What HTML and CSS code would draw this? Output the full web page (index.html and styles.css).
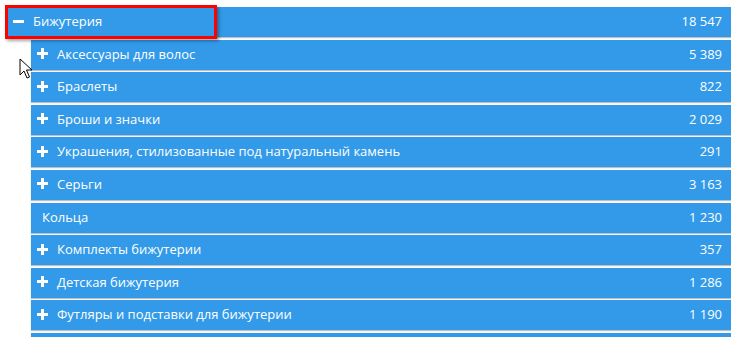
FILE: index.html
```html
<!DOCTYPE html>
<html lang="ru">

<head>
    <meta charset="UTF-8">
    <title>Бижутерия</title>
    <link rel="stylesheet" href="styles.css">
</head>

<body>
    <div class="tree">
        <div class="row root">
            <span class="toggle minus"></span>
            <span class="name">Бижутерия</span>
            <span class="count">18 547</span>
        </div>
        <div class="children">
            <div class="row"><span class="toggle plus"></span><span class="name">Аксессуары для волос</span><span class="count">5 389</span></div>
            <div class="row"><span class="toggle plus"></span><span class="name">Браслеты</span><span class="count">822</span></div>
            <div class="row"><span class="toggle plus"></span><span class="name">Броши и значки</span><span class="count">2 029</span></div>
            <div class="row"><span class="toggle plus"></span><span class="name">Украшения, стилизованные под натуральный камень</span><span class="count">291</span></div>
            <div class="row"><span class="toggle plus"></span><span class="name">Серьги</span><span class="count">3 163</span></div>
            <div class="row leaf"><span class="name">Кольца</span><span class="count">1 230</span></div>
            <div class="row"><span class="toggle plus"></span><span class="name">Комплекты бижутерии</span><span class="count">357</span></div>
            <div class="row"><span class="toggle plus"></span><span class="name">Детская бижутерия</span><span class="count">1 286</span></div>
            <div class="row"><span class="toggle plus"></span><span class="name">Футляры и подставки для бижутерии</span><span class="count">1 190</span></div>
            <div class="row"></div>
        </div>
    </div>

    <div class="highlight"></div>

    <svg class="cursor" width="14" height="22" viewBox="0 0 14 22">
        <path d="M1 1 L1 17 L5 13 L8 20 L10.5 19 L7.5 12 L13 12 Z" fill="#fff" stroke="#000" stroke-width="1" stroke-linejoin="round"/>
    </svg>
</body>

</html>
```

FILE: styles.css
```css
html {
    height: 337px;
    overflow: hidden;
}

body {
    margin: 7px 9px 0 8px;
    font-family: 'Open Sans', 'Liberation Sans', sans-serif;
    font-size: 13px;
    background: #fff;
}

.tree {
    width: 723px;
}

.children {
    margin-left: 23px;
}

.row {
    display: flex;
    align-items: center;
    box-sizing: border-box;
    height: 30px;
    margin-bottom: 2.6px;
    padding: 0 9px 2px 6px;
    background-color: #329ae8;
    color: #fff;
    box-shadow: 0 1px 1px rgba(0, 0, 0, 0.25);
}

.row.leaf {
    padding-left: 11px;
}

.root {
    padding-left: 5px;
}

.name {
    flex: 1;
}

.toggle {
    position: relative;
    width: 11px;
    height: 11px;
    margin-right: 9px;
}

.toggle::before,
.toggle::after {
    content: "";
    position: absolute;
    background: #fff;
}

.toggle::before {
    left: 0;
    right: 0;
    top: 4px;
    height: 3px;
}

.plus::after {
    top: 0;
    bottom: 0;
    left: 4px;
    width: 3px;
}

.highlight {
    position: absolute;
    z-index: 5;
    left: 5px;
    top: 5px;
    width: 206px;
    height: 28px;
    border: 3px solid #f00;
    box-shadow: 2px 2px 3px rgba(0, 0, 0, 0.35);
}

.cursor {
    position: absolute;
    z-index: 6;
    left: 19px;
    top: 58px;
}
```
